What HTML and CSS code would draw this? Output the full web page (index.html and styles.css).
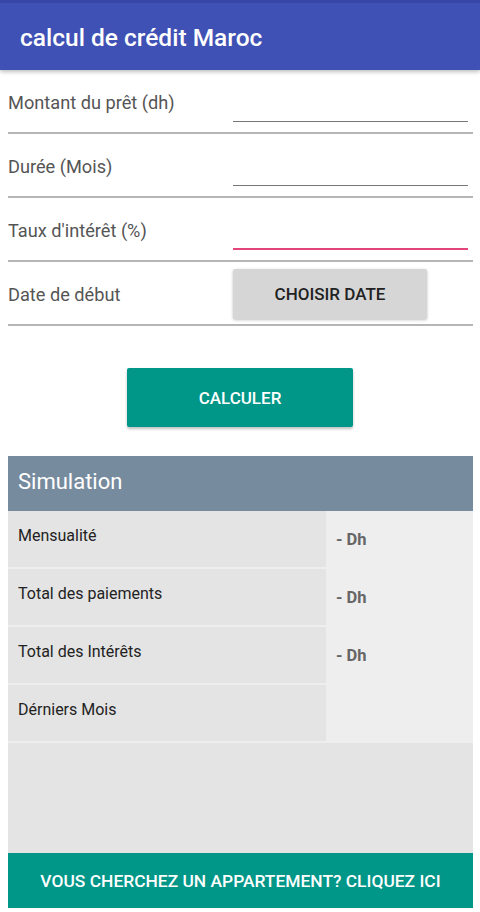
FILE: index.html
```html
<!DOCTYPE html>
<html lang="fr">
<head>
  <meta charset="UTF-8">
  <meta name="viewport" content="width=device-width, initial-scale=1.0">
  <title>calcul de crédit Maroc</title>
  <link rel="stylesheet" href="styles.css">
</head>
<body>
  <div id="appbar">calcul de crédit Maroc</div>

  <div id="form">
    <div class="row">
      <span class="label">Montant du prêt (dh)</span>
      <div class="field"><span class="line"></span></div>
    </div>
    <div class="row">
      <span class="label">Durée (Mois)</span>
      <div class="field"><span class="line"></span></div>
    </div>
    <div class="row">
      <span class="label">Taux d'intérêt (%)</span>
      <div class="field"><span class="line line-focus"></span></div>
    </div>
    <div class="row">
      <span class="label">Date de début</span>
      <div class="field-btn"><button class="btn-date">CHOISIR DATE</button></div>
    </div>
  </div>

  <div id="calc">
    <button class="btn-calc">CALCULER</button>
  </div>

  <div id="simulation">
    <div class="sim-head">Simulation</div>
    <div class="sim-body">
      <div class="sim-row">
        <div class="sim-label">Mensualité</div>
        <div class="sim-value">- Dh</div>
      </div>
      <div class="sim-row">
        <div class="sim-label">Total des paiements</div>
        <div class="sim-value">- Dh</div>
      </div>
      <div class="sim-row">
        <div class="sim-label">Total des Intérêts</div>
        <div class="sim-value">- Dh</div>
      </div>
      <div class="sim-row">
        <div class="sim-label">Dérniers Mois</div>
        <div class="sim-value"></div>
      </div>
    </div>
    <div class="sim-empty"></div>
    <div class="banner">VOUS CHERCHEZ UN APPARTEMENT? CLIQUEZ ICI</div>
  </div>
</body>
</html>
```

FILE: styles.css
```css
body {
  margin: 0;
  font-family: Roboto, "Noto Sans", sans-serif;
  background: #fff;
}
#appbar {
  height: 70px;
  box-sizing: border-box;
  padding: 20px 0 0 20px;
  background: #3f51b5;
  border-top: 3px solid #3546a6;
  color: #fff;
  font-size: 24.5px;
  font-weight: 500;
  box-shadow: 0 2px 4px rgba(0, 0, 0, 0.25);
}
#form {
  padding: 0 7px 0 8px;
}
.row {
  display: grid;
  grid-template-columns: 225px 1fr;
  align-items: center;
  height: 64px;
  box-sizing: border-box;
  border-bottom: 2px solid #b5b5b5;
}
.label {
  color: #555;
  font-size: 18.2px;
  margin-top: 2px;
}
.field {
  align-self: stretch;
  display: flex;
  align-items: flex-end;
  padding: 0 5px 10px 0;
}
.line {
  display: block;
  width: 100%;
  height: 1px;
  background: #777;
}
.line-focus {
  height: 2px;
  background: #e4467c;
}
.field-btn {
  display: flex;
  align-items: center;
  padding-top: 2px;
}
.btn-date {
  width: 194px;
  height: 50px;
  border: none;
  border-radius: 2px;
  background: #d6d6d6;
  color: #222;
  font-family: inherit;
  font-size: 17px;
  font-weight: 500;
  box-shadow: 0 1px 3px rgba(0, 0, 0, 0.25);
}
#calc {
  display: flex;
  justify-content: center;
  padding: 42px 0 29px 0;
}
.btn-calc {
  width: 226px;
  height: 59px;
  border: none;
  border-radius: 2px;
  background: #009688;
  color: #fff;
  font-family: inherit;
  font-size: 17px;
  font-weight: 500;
  box-shadow: 0 2px 3px rgba(0, 0, 0, 0.25);
}
#simulation {
  margin: 0 7px 0 8px;
}
.sim-head {
  height: 55px;
  box-sizing: border-box;
  padding: 13px 0 0 10px;
  background: #778b9e;
  color: #fff;
  font-size: 22px;
}
.sim-body {
  background: #eeeeee;
}
.sim-row {
  display: grid;
  grid-template-columns: 318px 1fr;
  height: 58px;
}
.sim-label {
  margin-bottom: 2px;
  padding: 15px 0 0 10px;
  background: #e4e4e4;
  color: #222;
  font-size: 16px;
}
.sim-value {
  padding: 19px 0 0 10px;
  color: #666;
  font-size: 16.5px;
  font-weight: 700;
}
.sim-empty {
  height: 110px;
  background: #e4e4e4;
}
.banner {
  height: 55px;
  display: flex;
  align-items: center;
  justify-content: center;
  background: #009688;
  color: #fff;
  font-size: 17.4px;
  font-weight: 500;
}
```
